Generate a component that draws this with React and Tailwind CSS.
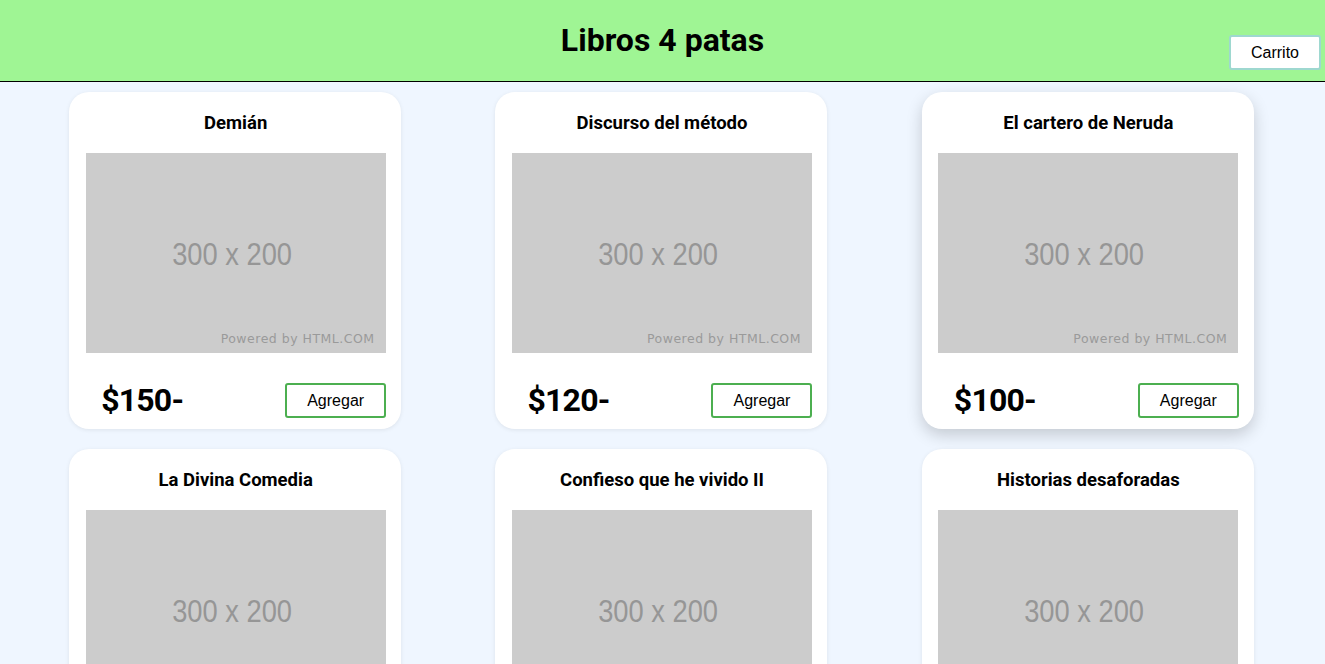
const books = [
  { title: "Demián", price: 150 },
  { title: "Discurso del método", price: 120 },
  { title: "El cartero de Neruda", price: 100, hovered: true },
  { title: "La Divina Comedia", price: 90 },
  { title: "Confieso que he vivido II", price: 110 },
  { title: "Historias desaforadas", price: 130 },
];

function Placeholder() {
  return (
    <div className="relative w-[300px] h-[200px] bg-[#cccccc] flex items-center justify-center">
      <span className="inline-block text-[31px] text-[#969696] font-['Liberation_Sans',Arial,sans-serif] scale-x-[0.88] -ml-2 mt-1">
        300 x 200
      </span>
      <span className="absolute right-[11px] bottom-[4px] text-[12.5px] tracking-[0.5px] text-[#9a9a9a] font-['DejaVu_Sans',sans-serif]">
        Powered by HTML.COM
      </span>
    </div>
  );
}

function BookCard({ book }) {
  return (
    <div
      className={`w-[332px] bg-white rounded-[20px] pt-[18px] pb-[11px] pl-4 pr-[15px] flex flex-col items-center ${
        book.hovered
          ? "shadow-[0_6px_16px_rgba(0,0,0,0.18)]"
          : "shadow-[0_1px_4px_rgba(0,0,0,0.08)]"
      }`}
    >
      <h2 className="text-[18.5px] leading-[27px] font-bold text-black">
        {book.title}
      </h2>
      <div className="mt-4">
        <Placeholder />
      </div>
      <div className="w-full mt-[30px] flex items-center justify-between">
        <span className="ml-4 text-[32px] leading-[35px] font-bold text-black tracking-[-0.8px]">
          ${book.price}-
        </span>
        <button className="w-[101px] h-[35px] border-2 border-[#4caf50] rounded-[3px] bg-white text-[16px] text-black font-['Liberation_Sans',Arial,sans-serif]">
          Agregar
        </button>
      </div>
    </div>
  );
}

export default function App() {
  return (
    <div className="min-h-screen bg-[#eff6ff] font-['Roboto',sans-serif]">
      <header className="relative h-[82px] bg-[#9ff594] border-b border-black flex justify-center">
        <h1 className="mt-[20px] text-[32px] leading-[40px] font-bold text-black">
          Libros 4 patas
        </h1>
        <button className="absolute right-[4px] top-[35px] w-[92px] h-[35px] bg-white border-2 border-[#9ed8d0] rounded-[3px] text-[16px] text-black font-['Liberation_Sans',Arial,sans-serif]">
          Carrito
        </button>
      </header>

      <main className="pl-[22px] pr-6 pt-[10px] grid grid-cols-3 gap-y-5 justify-items-center">
        {books.map((book) => (
          <BookCard key={book.title} book={book} />
        ))}
      </main>
    </div>
  );
}
